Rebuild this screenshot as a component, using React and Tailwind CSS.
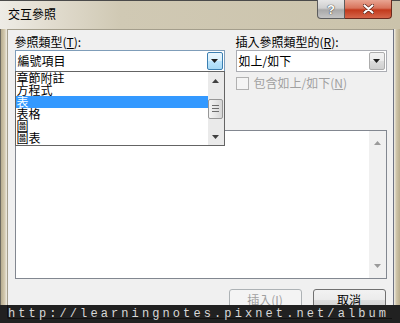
const font = { fontFamily: '"Noto Sans CJK TC", "Noto Sans CJK SC", "Liberation Sans", sans-serif' };

const Arrow = ({ up = false, color = '#1f1f1f' }) => (
  <svg width="7" height="4" viewBox="0 0 7 4" className="block">
    <path d={up ? 'M0 4 L3.5 0 L7 4 Z' : 'M0 0 L7 0 L3.5 4 Z'} fill={color} />
  </svg>
);

const ComboButton = ({ hot = false }) => (
  <div
    className={`w-[16px] h-full flex items-center justify-center rounded-[2px] border ${
      hot
        ? 'border-[#3c7fb1] bg-[linear-gradient(#eaf6fd,#d9f0fc_50%,#bee6fd_50%,#a7d9f5)]'
        : 'border-[#acacac] bg-[linear-gradient(#f2f2f2,#ebebeb_50%,#dddddd_50%,#cfcfcf)]'
    }`}
  >
    <Arrow />
  </div>
);

const Label = ({ text, hot }) => (
  <div className="h-[14px] text-[12px] leading-[14px] text-black whitespace-nowrap">
    {text}(<span className="underline">{hot}</span>):
  </div>
);

const dropItems = ['章節附註', '方程式', '表', '表格', '圖', '圖表'];

export default function App() {
  return (
    <div className="w-[400px] h-[323px] relative overflow-hidden bg-[#cbc3ab]" style={font}>
      {/* title bar */}
      <div className="h-[29px] flex justify-between border-t border-[#4a4a4a] bg-[linear-gradient(90deg,#eeece6_0%,#e2ddd0_12%,#d0c9b4_30%,#cbc3ab_100%)]">
        <div className="pl-[8px] pt-[6px] text-[12px] leading-[14px] text-black">交互參照</div>
        <div className="flex mr-[8px] h-[19px] -mt-px">
          <div className="w-[28px] h-full flex items-center justify-center rounded-bl-[4px] border border-t-0 border-[#5c5c5c] bg-[linear-gradient(#e6e6e6,#cfcfcf_45%,#a9a9a9_55%,#c4c4c4)]">
            <span className="text-[13px] font-bold leading-none text-white" style={{ fontFamily: '"Liberation Sans", sans-serif', textShadow: '0 0 1px #333, 0 0 1px #333' }}>?</span>
          </div>
          <div className="w-[47px] h-full flex items-center justify-center rounded-br-[4px] border border-l-0 border-t-0 border-[#6b2a1e] bg-[linear-gradient(#e9a592,#d8735b_45%,#c2391c_55%,#d5664a)]">
            <svg width="11" height="10" viewBox="0 0 11 10">
              <path d="M1.5 1.5 L9.5 8.5 M9.5 1.5 L1.5 8.5" stroke="#5a2216" strokeWidth="3.6" strokeLinecap="round" />
              <path d="M1.5 1.5 L9.5 8.5 M9.5 1.5 L1.5 8.5" stroke="#ffffff" strokeWidth="2.2" strokeLinecap="round" />
            </svg>
          </div>
        </div>
      </div>

      <div className="flex h-[294px]">
        {/* left frame */}
        <div className="w-[7px] border-l border-[#6d6a60] bg-[linear-gradient(90deg,#b8ad8f,#d4cab0_60%,#efece4)]" />

        {/* client area */}
        <div className="relative flex-1 flex flex-col bg-[#f0f0f0] border-l border-t border-[#a49e8c] pl-[7px] pr-[6px] pt-[5px]">
          <div className="flex gap-[11px]">
            <div className="w-[210px] flex flex-col">
              <Label text="參照類型" hot="T" />
              <div className="mt-[1px] h-[22px] flex items-center justify-between bg-white border border-[#7f9db9] pl-[2px] pr-[1px] py-[1px]">
                <span className="text-[12px] leading-[14px] text-black">編號項目</span>
                <ComboButton hot />
              </div>
            </div>
            <div className="w-[151px] flex flex-col">
              <Label text="插入參照類型的" hot="R" />
              <div className="mt-[1px] h-[22px] flex items-center justify-between bg-white border border-[#abadb3] pl-[2px] pr-[1px] py-[1px]">
                <span className="text-[12px] leading-[14px] text-black">如上/如下</span>
                <ComboButton />
              </div>
              <div className="mt-[4px] flex items-center gap-[5px]">
                <div className="w-[13px] h-[13px] border border-[#b1b1b1] bg-[#f4f4f4]" />
                <span className="text-[12px] leading-[14px] text-[#a0a0a0]">
                  包含如上/如下(<span className="underline">N</span>)
                </span>
              </div>
            </div>
          </div>

          {/* main list box */}
          <div className="mt-[40px] h-[149px] flex bg-white border border-[#828790]">
            <div className="flex-1" />
            <div className="w-[17px] flex flex-col justify-between items-center bg-[#f0f0f0] py-[10px]">
              <Arrow up color="#9a9a9a" />
              <Arrow color="#9a9a9a" />
            </div>
          </div>

          {/* buttons */}
          <div className="mt-[10px] flex justify-end gap-[11px] pr-[1px]">
            <div className="w-[73px] h-[22px] flex items-center justify-center rounded-[3px] border border-[#adb2b5] bg-[#f4f4f4] text-[12px] leading-[14px] text-[#a0a0a0]">
              插入(<span className="underline">I</span>)
            </div>
            <div className="w-[73px] h-[22px] flex items-center justify-center rounded-[3px] border border-[#707070] bg-[linear-gradient(#f2f2f2,#ebebeb_50%,#dddddd_50%,#cfcfcf)] text-[12px] leading-[14px] text-black">
              取消
            </div>
          </div>

          {/* open dropdown list */}
          <div className="absolute left-[7px] top-[41px] w-[210px] h-[75px] flex bg-white border border-[#646464]">
            <div className="flex-1 flex flex-col">
              {dropItems.map((item) => (
                <div
                  key={item}
                  className={`h-[12px] pl-[1px] text-[12px] leading-[12px] whitespace-nowrap ${
                    item === '表' ? 'bg-[#3399ff] text-white' : 'text-black'
                  }`}
                >
                  {item}
                </div>
              ))}
            </div>
            <div className="w-[16px] flex flex-col items-center bg-[#eaeaea]">
              <div className="h-[17px] flex items-center justify-center">
                <Arrow up color="#404040" />
              </div>
              <div className="flex-1 flex items-center justify-center w-full">
                <div className="w-[15px] h-[20px] rounded-[2px] border border-[#979797] bg-[linear-gradient(90deg,#f3f3f3,#e6e6e6_50%,#d6d6d6)] flex flex-col items-center justify-center gap-[2px]">
                  <div className="w-[7px] h-px bg-[#6d6d6d]" />
                  <div className="w-[7px] h-px bg-[#6d6d6d]" />
                  <div className="w-[7px] h-px bg-[#6d6d6d]" />
                </div>
              </div>
              <div className="h-[17px] flex items-center justify-center">
                <Arrow color="#404040" />
              </div>
            </div>
          </div>
        </div>

        {/* right frame */}
        <div className="w-[8px] border-l border-[#6f7383] bg-[linear-gradient(90deg,#efece4,#cfc5aa_40%,#b9ad8e)]" />
      </div>

      {/* watermark bar */}
      <div className="absolute left-0 right-0 bottom-0 h-[18px] bg-[#212121] flex items-center pl-[8px]">
        <div className="absolute left-[7px] right-[8px] top-0 bottom-[4px] border-l border-b border-[#111111] rounded-bl-[3px]" />
        <span
          className="relative text-[12px] leading-[12px] text-[#d8d8d8] tracking-[3.1px] whitespace-nowrap"
          style={{ fontFamily: '"Liberation Mono", monospace' }}
        >
          http://learningnotes.pixnet.net/album
        </span>
      </div>
    </div>
  );
}
